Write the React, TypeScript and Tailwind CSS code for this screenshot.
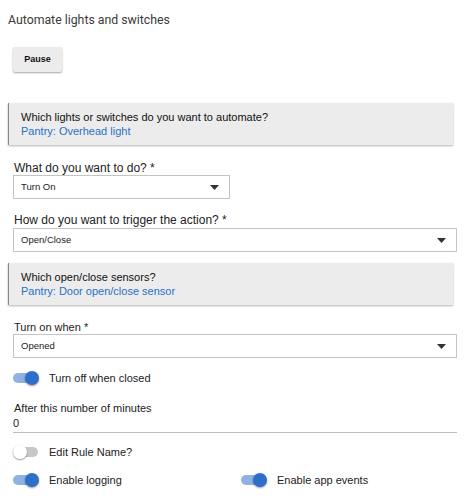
import React from "react";

function Caret() {
  return (
    <svg width="9" height="5" viewBox="0 0 9 5" className="shrink-0">
      <path d="M0 0 L9 0 L4.5 5 Z" fill="#333" />
    </svg>
  );
}

function SelectBox({ value, width }: { value: string; width: string }) {
  return (
    <div
      className={`${width} h-[24px] ml-[13px] border border-[#c4c4c4] bg-white flex items-center justify-between pl-[7px] pr-[10px] text-[9.5px] text-[#222]`}
    >
      <span>{value}</span>
      <Caret />
    </div>
  );
}

function InfoBox({ title, link }: { title: string; link: string }) {
  return (
    <div className="ml-[8px] w-[445px] h-[42px] bg-[#ececec] border-l-[1.5px] border-[#8a8a8a] shadow-[0_1px_2px_rgba(0,0,0,0.3)] pl-[12px] pt-[7px] text-[11px] leading-[14px]">
      <div className="text-[#111]">{title}</div>
      <div className="text-[#2a6fc9]">{link}</div>
    </div>
  );
}

function Toggle({ on }: { on: boolean }) {
  return (
    <div className="relative w-[26px] h-[14px] shrink-0">
      <div
        className={`absolute left-0 right-[1px] top-[2px] h-[10px] rounded-full ${
          on ? "bg-[#8fb2e3]" : "bg-[#c8c8c8]"
        }`}
      />
      <div
        className={`absolute top-0 w-[14px] h-[14px] rounded-full shadow-[0_1px_2px_rgba(0,0,0,0.4)] ${
          on ? "right-0 bg-[#2e6fcb]" : "left-0 bg-white"
        }`}
      />
    </div>
  );
}

function ToggleRow({ on, label }: { on: boolean; label: string }) {
  return (
    <div className="flex items-center gap-[10px] h-[16px]">
      <Toggle on={on} />
      <span className="text-[11px] text-[#222]">{label}</span>
    </div>
  );
}

export default function App() {
  const font = { fontFamily: '"Liberation Sans", Arial, sans-serif' };
  return (
    <div className="w-[472px] h-[500px] bg-white overflow-hidden" style={font}>
      <div
        className="pt-[12px] pl-[8px] text-[12.3px] leading-[16px] text-[#3a3a3a]"
        style={{ fontFamily: 'Roboto, "Liberation Sans", sans-serif' }}
      >
        Automate lights and switches
      </div>

      <div className="mt-[19px] ml-[13px] w-[49px] h-[25px] bg-[#ececec] rounded-[2px] shadow-[0_1px_2px_rgba(0,0,0,0.35)] flex items-center justify-center text-[9px] font-bold text-[#111]">
        Pause
      </div>

      <div className="mt-[31px]">
        <InfoBox
          title="Which lights or switches do you want to automate?"
          link="Pantry: Overhead light"
        />
      </div>

      <div className="mt-[16px] ml-[14px] text-[12px] leading-[14px] text-[#222]">
        What do you want to do? *
      </div>
      <div>
        <SelectBox value="Turn On" width="w-[217px]" />
      </div>

      <div className="mt-[14px] ml-[14px] text-[12px] leading-[14px] text-[#222]">
        How do you want to trigger the action? *
      </div>
      <div className="mt-[1px]">
        <SelectBox value="Open/Close" width="w-[444px]" />
      </div>

      <div className="mt-[11px]">
        <InfoBox title="Which open/close sensors?" link="Pantry: Door open/close sensor" />
      </div>

      <div className="mt-[16px] ml-[14px] text-[11px] leading-[13px] text-[#222]">
        Turn on when *
      </div>
      <div>
        <SelectBox value="Opened" width="w-[444px]" />
      </div>

      <div className="mt-[12px] ml-[13px]">
        <ToggleRow on={true} label="Turn off when closed" />
      </div>

      <div className="mt-[15px] ml-[14px] text-[11px] leading-[14px] text-[#222]">
        After this number of minutes
      </div>
      <div className="mt-[1px] ml-[13px] w-[444px] border-b border-[#bdbdbd] pb-[2px] text-[11px] leading-[14px] text-[#222]">
        0
      </div>

      <div className="mt-[11px] ml-[13px]">
        <ToggleRow on={false} label="Edit Rule Name?" />
      </div>

      <div className="mt-[12px] ml-[13px] flex">
        <div className="w-[228px]">
          <ToggleRow on={true} label="Enable logging" />
        </div>
        <ToggleRow on={true} label="Enable app events" />
      </div>
    </div>
  );
}
